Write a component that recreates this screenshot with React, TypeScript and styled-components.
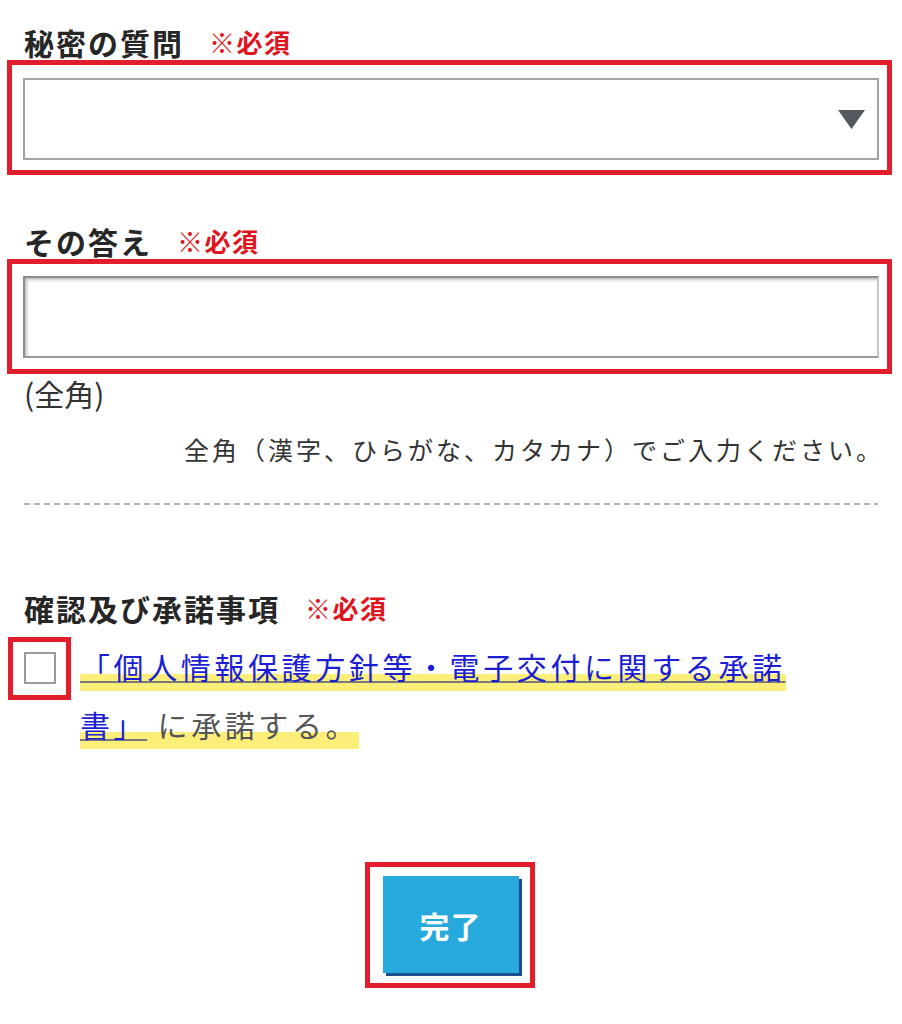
import React from "react";
import styled, { createGlobalStyle } from "styled-components";

const Global = createGlobalStyle`
  html, body { margin: 0; padding: 0; background: #ffffff; }
  body { font-family: "Noto Sans CJK JP", "Noto Sans", sans-serif; color: #222; }
`;

const Page = styled.div`
  width: 902px;
  box-sizing: border-box;
  padding: 24px 10px 40px 7px;
  display: flex;
  flex-direction: column;
`;

const LabelRow = styled.div<{ $mt?: number }>`
  display: flex;
  align-items: center;
  height: 36px;
  padding-left: 17px;
  margin-top: ${(p) => p.$mt ?? 0}px;
`;

const Label = styled.span`
  font-size: 30px;
  font-weight: 700;
  letter-spacing: 2px;
  color: #262626;
  line-height: 36px;
`;

const Required = styled.span`
  font-size: 26px;
  font-weight: 700;
  letter-spacing: 1.5px;
  color: #e0141e;
  margin-left: 25px;
  line-height: 36px;
`;

const RedFrame = styled.div<{ $pad: string }>`
  border: 5px solid #e31e2c;
  padding: ${(p) => p.$pad};
  box-sizing: border-box;
`;

const SelectBox = styled.div`
  height: 82px;
  box-sizing: border-box;
  border: 2px solid #a3a3a3;
  background: #fff;
  display: flex;
  align-items: center;
  justify-content: flex-end;
  padding-right: 12px;
`;

const InputBox = styled.div`
  height: 82px;
  box-sizing: border-box;
  border: 2px solid #8d8d8d;
  border-right-color: #c8c8c8;
  border-bottom-color: #9a9a9a;
  box-shadow: inset 2px 2px 3px rgba(0, 0, 0, 0.25);
  background: #fff;
`;

const Hint = styled.div`
  font-size: 30px;
  line-height: 34px;
  color: #333;
  padding-left: 17px;
  margin-top: 2px;
`;

const Note = styled.div`
  font-size: 25px;
  line-height: 34px;
  letter-spacing: 3px;
  color: #333;
  text-align: right;
  padding-right: 8px;
  margin-top: 22px;
`;

const Dashed = styled.div`
  height: 2px;
  margin: 37px 14px 0 17px;
  background: repeating-linear-gradient(
    to right,
    #b3b3b3 0 6px,
    transparent 6px 10px
  );
`;

const AgreeRow = styled.div`
  display: flex;
  align-items: flex-start;
  margin-top: 11px;
  padding-left: 1px;
`;

const CheckFrame = styled.div`
  width: 63px;
  height: 63px;
  box-sizing: border-box;
  border: 5px solid #e31e2c;
  padding: 10px 0 0 11px;
  flex-shrink: 0;
`;

const CheckBox = styled.div`
  width: 32px;
  height: 32px;
  box-sizing: border-box;
  border: 2px solid #9b9b9b;
  background: #fff;
`;

const AgreeText = styled.p`
  margin: 0 0 0 9px;
  width: 730px;
  font-size: 30px;
  line-height: 58px;
  letter-spacing: 3.6px;
  color: #555;
`;

const Marked = styled.span`
  background: linear-gradient(
    to bottom,
    transparent 64%,
    #fbef7a 64%
  );
  padding-bottom: 3px;
  -webkit-box-decoration-break: clone;
  box-decoration-break: clone;
`;

const Link = styled.a`
  color: #1c1ed4;
  text-decoration: underline;
  text-decoration-color: #7a7a7a;
  text-decoration-thickness: 2px;
  text-underline-offset: 2px;
`;

const ButtonWrap = styled.div`
  display: flex;
  justify-content: center;
  margin-top: 109px;
`;

const ButtonFrame = styled.div`
  border: 5px solid #e31e2c;
  padding: 9px 11px 10px 13px;
`;

const SubmitButton = styled.button`
  width: 136px;
  height: 97px;
  border: none;
  background: #27a9de;
  box-shadow: 3px 3px 0 #1c4f8e;
  color: #fff;
  font-family: "Noto Sans CJK JP", sans-serif;
  font-size: 30px;
  font-weight: 700;
  letter-spacing: 1px;
  cursor: pointer;
`;

const Caret = () => (
  <svg width="27" height="19" viewBox="0 0 27 19">
    <polygon points="0,0 27,0 13.5,19" fill="#53575e" />
  </svg>
);

export default function App() {
  return (
    <>
      <Global />
      <Page>
        <LabelRow>
          <Label>秘密の質問</Label>
          <Required>※必須</Required>
        </LabelRow>
        <RedFrame $pad="13px 8px 10px 11px">
          <SelectBox>
            <Caret />
          </SelectBox>
        </RedFrame>

        <LabelRow $mt={48}>
          <Label>その答え</Label>
          <Required>※必須</Required>
        </LabelRow>
        <RedFrame $pad="12px 8px 11px 11px">
          <InputBox />
        </RedFrame>
        <Hint>(全角)</Hint>
        <Note>全角（漢字、ひらがな、カタカナ）でご入力ください。</Note>
        <Dashed />

        <LabelRow $mt={85}>
          <Label>確認及び承諾事項</Label>
          <Required>※必須</Required>
        </LabelRow>
        <AgreeRow>
          <CheckFrame>
            <CheckBox />
          </CheckFrame>
          <AgreeText>
            <Marked>
              <Link href="#">「個人情報保護方針等・電子交付に関する承諾書」</Link>
              {" "}に承諾する。
            </Marked>
          </AgreeText>
        </AgreeRow>

        <ButtonWrap>
          <ButtonFrame>
            <SubmitButton>完了</SubmitButton>
          </ButtonFrame>
        </ButtonWrap>
      </Page>
    </>
  );
}
